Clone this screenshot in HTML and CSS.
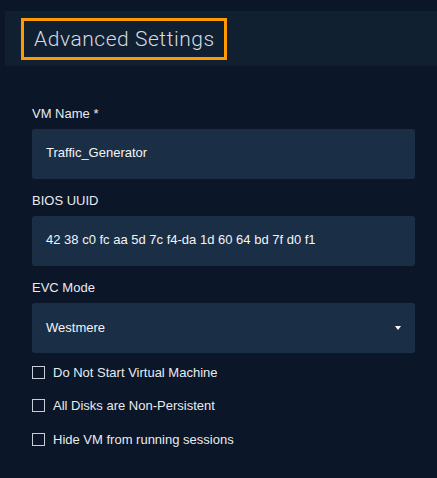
FILE: index.html
```html
<!DOCTYPE html>
<html lang="en">
<head>
    <meta charset="UTF-8">
    <meta name="viewport" content="width=device-width, initial-scale=1.0">
    <title>Advanced Settings</title>
    <link rel="stylesheet" href="styles.css">
</head>
<body>

    <div class="header">
        <h1 class="title">Advanced Settings</h1>
    </div>

    <form class="settings">
        <div class="field">
            <label class="label">VM Name *</label>
            <div class="input">Traffic_Generator</div>
        </div>
        <div class="field">
            <label class="label">BIOS UUID</label>
            <div class="input">42 38 c0 fc aa 5d 7c f4-da 1d 60 64 bd 7f d0 f1</div>
        </div>
        <div class="field field-last">
            <label class="label">EVC Mode</label>
            <div class="input select">
                <span>Westmere</span>
                <span class="caret"></span>
            </div>
        </div>

        <div class="checks">
            <label class="check"><span class="box"></span>Do Not Start Virtual Machine</label>
            <label class="check"><span class="box"></span>All Disks are Non-Persistent</label>
            <label class="check"><span class="box"></span>Hide VM from running sessions</label>
        </div>
    </form>

</body>
</html>
```

FILE: styles.css
```css
* {
    margin: 0;
    padding: 0;
    box-sizing: border-box;
}
body {
    font-family: "Liberation Sans", Arial, sans-serif;
    background-color: #0b1628;
    color: #e8ebf0;
    height: 478px;
    overflow: hidden;
}
.header {
    margin: 11px 0 0 5px;
    height: 55px;
    padding: 7px 0 0 16px;
    background-color: #102031;
}
.title {
    display: inline-block;
    width: 206px;
    height: 42px;
    padding: 0 0 0 10px;
    border: 3px solid #ff9b00;
    font-family: Roboto, sans-serif;
    font-weight: 300;
    font-size: 21px;
    letter-spacing: 0.55px;
    line-height: 36px;
    color: #d6dae0;
}
.settings {
    padding: 40px 22px 0 32px;
}
.field {
    margin-bottom: 14px;
}
.field-last {
    margin-bottom: 3px;
}
.label {
    display: block;
    font-size: 13px;
    line-height: 16px;
    margin-bottom: 7px;
}
.input {
    height: 50px;
    padding: 0 14px;
    border-radius: 3px;
    background-color: #1a2e46;
    font-size: 13px;
    line-height: 48px;
    color: #f2f4f7;
}
.select {
    display: flex;
    justify-content: space-between;
    align-items: center;
}
.caret {
    width: 0;
    height: 0;
    border-left: 3.5px solid transparent;
    border-right: 3.5px solid transparent;
    border-top: 4px solid #ffffff;
}
.check {
    display: flex;
    align-items: center;
    height: 33.3px;
    font-size: 13px;
}
.box {
    width: 13px;
    height: 13px;
    margin-right: 8px;
    border: 1px solid #c9ced6;
}
```
